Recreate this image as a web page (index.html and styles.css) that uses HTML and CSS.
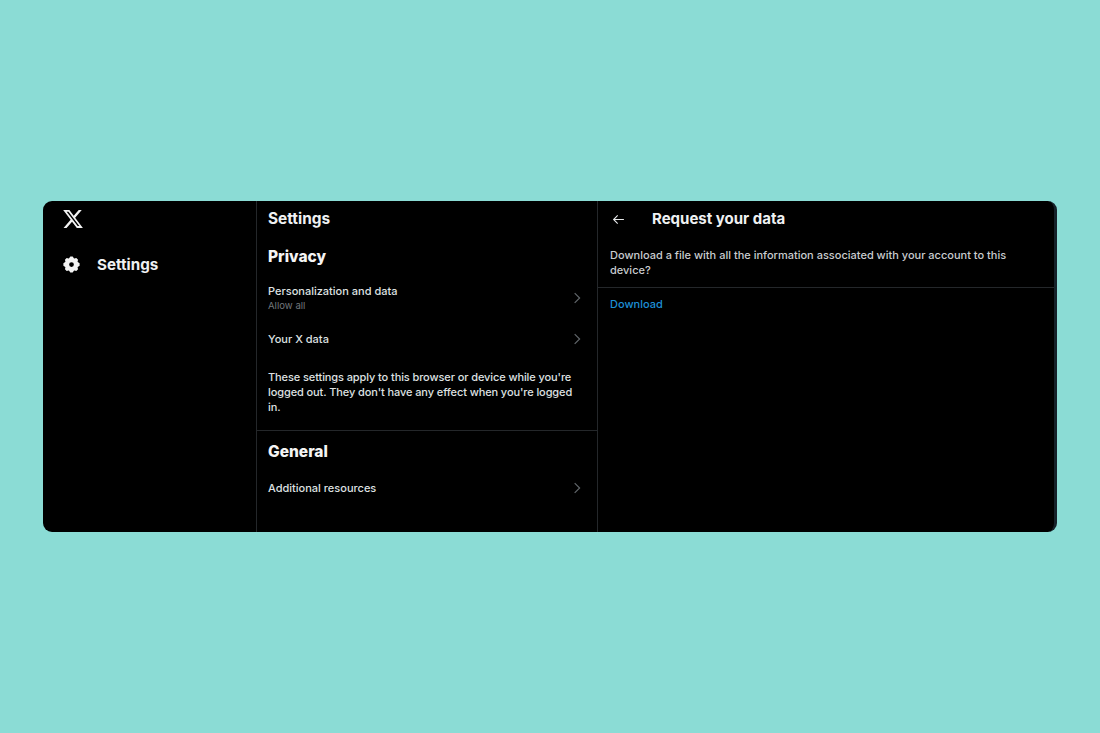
FILE: index.html

```html
<!DOCTYPE html>
<html lang="en">
<head>
    <meta charset="UTF-8">
    <title>Request your data</title>
    <link rel="stylesheet" href="styles.css">
</head>
<body>
    <div class="window">
        <div class="sidebar">
            <svg class="x-logo" viewBox="0 0 24 24"><path d="M18.244 2.25h3.308l-7.227 8.26 8.502 11.24H16.17l-5.214-6.817L4.99 21.75H1.68l7.73-8.835L1.254 2.25H8.08l4.713 6.231zm-1.161 17.52h1.833L7.084 4.126H5.117z"/></svg>
            <div class="nav-item">
                <svg class="gear" viewBox="0 0 24 24"><path fill-rule="evenodd" d="M10.54 1.75h2.92l1.57 2.36c.11.17.32.25.53.21l2.53-.59 2.17 2.17-.58 2.54c-.05.2.04.41.21.53l2.36 1.57v2.92l-2.36 1.57c-.17.12-.26.33-.21.53l.58 2.54-2.17 2.17-2.53-.59c-.21-.04-.42.04-.53.21l-1.57 2.36h-2.92l-1.58-2.36c-.11-.17-.32-.25-.52-.21l-2.54.59-2.17-2.17.58-2.54c.05-.2-.03-.41-.21-.53l-2.35-1.57v-2.92L4.1 8.97c.18-.12.26-.33.21-.53L3.73 5.9 5.9 3.73l2.54.59c.2.04.41-.04.52-.21l1.58-2.36zM12 9a3 3 0 1 0 0 6 3 3 0 0 0 0-6z"/></svg>
                <span>Settings</span>
            </div>
        </div>

        <div class="middle">
            <h2 class="column-title">Settings</h2>
            <div class="section">
                <h3 class="section-title">Privacy</h3>
                <div class="row row-double">
                    <div>
                        <div class="row-label">Personalization and data</div>
                        <div class="row-sub">Allow all</div>
                    </div>
                    <svg class="chevron" viewBox="0 0 24 24"><path d="M8 3.5 16.5 12 8 20.5"/></svg>
                </div>
                <div class="row row-single">
                    <div class="row-label">Your X data</div>
                    <svg class="chevron" viewBox="0 0 24 24"><path d="M8 3.5 16.5 12 8 20.5"/></svg>
                </div>
                <p class="note">These settings apply to this browser or device while you're logged out. They don't have any effect when you're logged in.</p>
            </div>
            <div class="section">
                <h3 class="section-title general-title">General</h3>
                <div class="row row-last">
                    <div class="row-label">Additional resources</div>
                    <svg class="chevron" viewBox="0 0 24 24"><path d="M8 3.5 16.5 12 8 20.5"/></svg>
                </div>
            </div>
        </div>

        <div class="detail">
            <div class="detail-header">
                <svg class="back" viewBox="0 0 24 24"><path d="M22 12H3M10.5 4.5 3 12l7.5 7.5"/></svg>
                <h2 class="column-title">Request your data</h2>
            </div>
            <p class="detail-text">Download a file with all the information associated with your account to this device?</p>
            <a class="download">Download</a>
        </div>
    </div>
</body>
</html>
```

FILE: styles.css

```css
* {
    margin: 0;
    padding: 0;
    box-sizing: border-box;
}

body {
    background: #8bdcd5;
    height: 733px;
    display: flex;
    align-items: center;
    justify-content: center;
    font-family: Inter, "Liberation Sans", sans-serif;
    color: #e7e9ea;
}

.window {
    width: 1014px;
    height: 331px;
    background: #000;
    border-right: 3px solid #16222a;
    border-radius: 9px;
    display: flex;
    overflow: hidden;
}

.sidebar {
    width: 214px;
    border-right: 1px solid #24272a;
    padding: 7px 0 0 19px;
}

.x-logo {
    display: block;
    width: 22px;
    height: 22px;
    fill: #f2f2f2;
}

.nav-item {
    display: flex;
    align-items: center;
    gap: 16px;
    margin-top: 25px;
    font-size: 15.2px;
    font-weight: 700;
    color: #eff1f2;
}

.gear {
    width: 19px;
    height: 19px;
    fill: #f4f4f4;
}

.middle {
    width: 341px;
    border-right: 1px solid #24272a;
}

.column-title {
    font-size: 15px;
    font-weight: 700;
    line-height: 20px;
    color: #eff1f2;
}

.middle > .column-title {
    padding: 8px 0 0 11px;
    font-size: 15.4px;
}

.section {
    padding: 0 11px;
}

.section + .section {
    border-top: 1px solid #24272a;
}

.section-title {
    font-size: 15.5px;
    font-weight: 800;
    line-height: 20px;
    color: #f4f4f4;
    padding-top: 18px;
}

.section-title.general-title {
    padding-top: 11px;
}

.row {
    display: flex;
    align-items: center;
    justify-content: space-between;
}

.row-double {
    margin-top: 16px;
    height: 29px;
}

.row-single {
    margin-top: 19px;
    height: 16px;
}

.row-last {
    margin-top: 18px;
    height: 16px;
}

.row-label {
    font-size: 11px;
    line-height: 14px;
    font-weight: 500;
    color: #dfe1e2;
}

.row-sub {
    margin-top: 2px;
    font-size: 9.6px;
    line-height: 12px;
    color: #71767b;
}

.chevron {
    width: 14px;
    height: 14px;
    margin-right: 2px;
    fill: none;
    stroke: #62676b;
    stroke-width: 2;
}

.note {
    margin-top: 23px;
    padding-bottom: 15px;
    font-size: 11px;
    letter-spacing: -0.1px;
    line-height: 15px;
    font-weight: 500;
    color: #dfe1e2;
}

.detail {
    flex: 1;
}

.detail-header {
    display: flex;
    align-items: center;
    gap: 27px;
    height: 36px;
    padding-left: 14px;
}

.back {
    width: 13px;
    height: 13px;
    fill: none;
    stroke: #e7e9ea;
    stroke-width: 2;
}

.detail-text {
    padding: 11px 12px 9px;
    border-bottom: 1px solid #24272a;
    font-size: 11px;
    line-height: 15px;
    font-weight: 500;
    color: #c9cccf;
}

.download {
    display: block;
    padding: 9px 12px;
    font-size: 11px;
    line-height: 15px;
    font-weight: 500;
    color: #1d8fd6;
}
```
